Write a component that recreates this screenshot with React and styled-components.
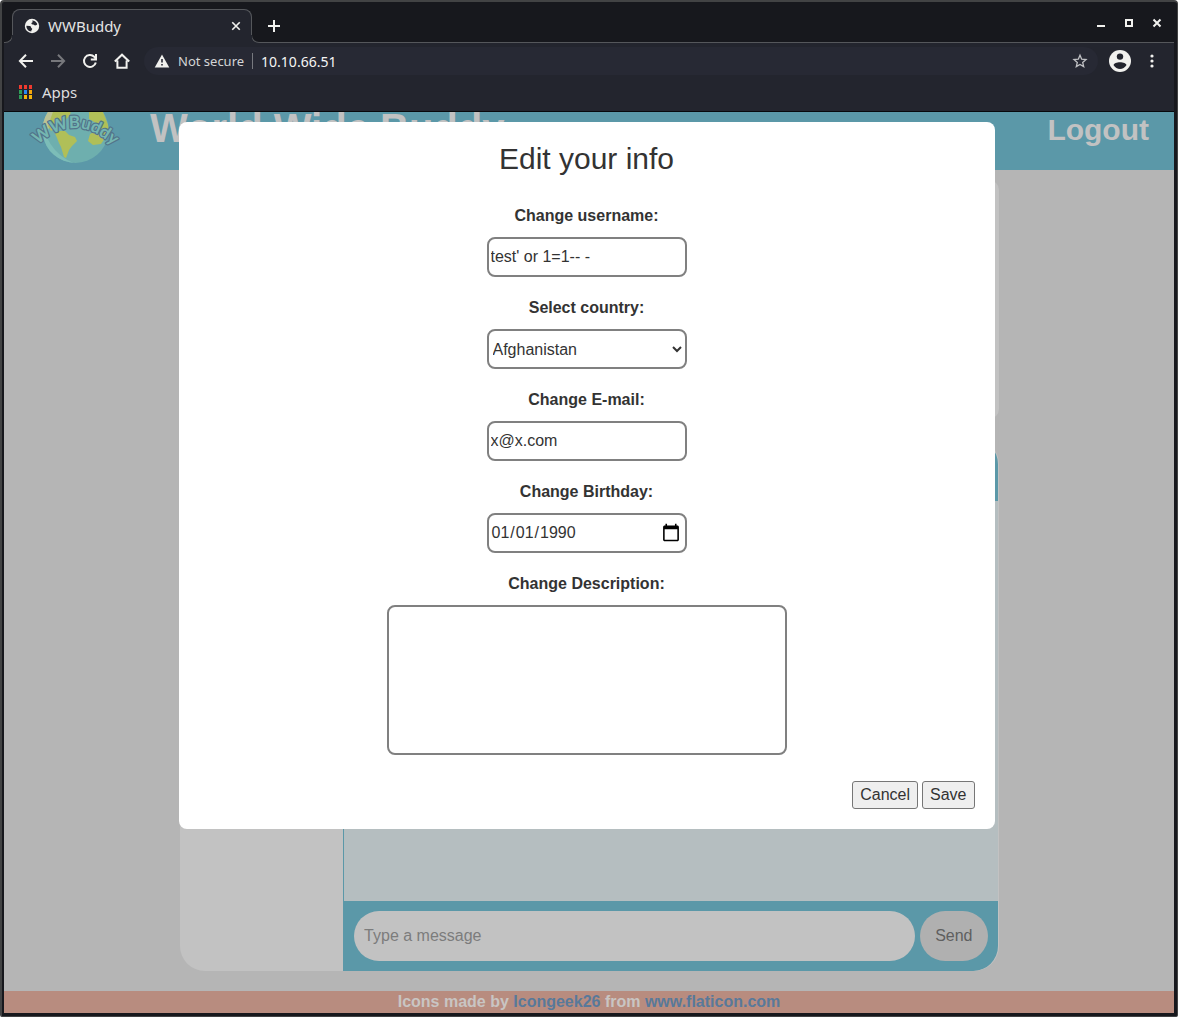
import React from "react";
import styled, { createGlobalStyle } from "styled-components";

const GlobalStyle = createGlobalStyle`
  *, *::before, *::after { box-sizing: border-box; }
  body { margin: 0; background: #fff; }
  button, input, select, textarea { font-family: inherit; margin: 0; }
`;

const sans = `"Liberation Sans", Arial, sans-serif`;
const chromeFont = `"Noto Sans", sans-serif`;

/* ---------- browser window ---------- */

const Window = styled.div`
  min-height: 100vh;
  display: flex;
  flex-direction: column;
  background: #17181d;
  border: 2px solid #424344;
  border-right-width: 1px;
  border-bottom-width: 1px;
  border-radius: 4px 4px 2px 2px;
  padding: 0 3px 3px 2px;
  font-family: ${chromeFont};
  color: #e4e4e4;
`;

const TabStrip = styled.div`
  display: flex;
  align-items: flex-end;
  height: 41px;
`;

const Foot = styled.span`
  width: 9px;
  height: 8px;
  background: #23252e;
  &::after {
    content: "";
    display: block;
    height: 8px;
    background: #17181d;
    border-bottom: 1px solid #55575b;
    border-${(p) => (p.$side === "left" ? "right" : "left")}: 1px solid #55575b;
    border-bottom-${(p) => (p.$side === "left" ? "right" : "left")}-radius: 8px;
  }
`;

const Tab = styled.div`
  position: relative;
  display: flex;
  align-items: center;
  gap: 8px;
  width: 240px;
  height: 34px;
  padding: 0 11px 1px 12px;
  margin: 0 -1px;
  background: #23252e;
  border-radius: 8px 8px 0 0;
  font-size: 15px;
  line-height: 20px;
  &::before {
    content: "";
    position: absolute;
    inset: 0 0 8px 0;
    border: 1px solid #55575b;
    border-bottom: 0;
    border-radius: 8px 8px 0 0;
    pointer-events: none;
  }
`;

const TabTitle = styled.span`
  flex: 1;
`;

const IconButton = styled.button`
  display: flex;
  align-items: center;
  justify-content: center;
  width: ${(p) => p.$size || 16}px;
  height: ${(p) => p.$size || 16}px;
  padding: 0;
  border: 0;
  background: none;
  color: ${(p) => (p.$dim ? "#77787c" : "#f1f1ee")};
`;

const StripRest = styled.div`
  flex: 1;
  align-self: stretch;
  display: flex;
  align-items: center;
  justify-content: space-between;
  padding: 8px 9px 0 2px;
  border-bottom: 1px solid #55575b;
`;

const WindowControls = styled.div`
  display: flex;
  gap: 12px;
  margin-top: -6px;
`;

const Toolbar = styled.div`
  display: flex;
  align-items: center;
  height: 36px;
  padding: 0 14px;
  background: #23252e;
`;

const Nav = styled.div`
  display: flex;
  gap: 16px;
  margin-right: 14px;
`;

const AddressBar = styled.div`
  flex: 1;
  display: flex;
  align-items: center;
  height: 28px;
  padding: 0 10px;
  margin-right: 11px;
  border-radius: 14px;
  background: #272934;
  font-size: 13px;
  line-height: 20px;
`;

const Security = styled.span`
  padding: 0 8px;
  color: #d4d5d6;
`;

const Address = styled.input`
  flex: 1;
  min-width: 0;
  padding: 0 0 0 8px;
  height: 16px;
  border: 0;
  border-left: 1px solid #77797f;
  background: none;
  color: #f5f5f5;
  font-size: 14px;
`;

const Actions = styled.div`
  display: flex;
  align-items: center;
  gap: 13px;
`;

const Bookmarks = styled.div`
  display: flex;
  align-items: center;
  height: 33px;
  padding: 0 15px 6px;
  background: #23252e;
  border-bottom: 1px solid #08090c;
`;

const Bookmark = styled.a`
  display: flex;
  align-items: center;
  gap: 9px;
  color: #dededf;
  font-size: 15px;
  line-height: 20px;
  text-decoration: none;
`;

/* ---------- site ---------- */

const Site = styled.div`
  position: relative;
  flex: 1;
  display: flex;
  flex-direction: column;
  background: #b5b5b5;
  font-family: ${sans};
  font-size: 16px;
  line-height: 18px;
`;

const SiteHeader = styled.header`
  display: flex;
  align-items: flex-end;
  height: 58px;
  padding: 0 25px 0 24px;
  background: #5b98a8;
  color: #c2c2c2;
`;

const SiteTitle = styled.h1`
  flex: 1;
  margin: 0 0 26px 30px;
  font-size: 40px;
  line-height: 32px;
`;

const Logout = styled.a`
  margin-bottom: 23px;
  color: inherit;
  font-size: 30px;
  font-weight: bold;
  line-height: 34px;
  text-decoration: none;
`;

const Main = styled.main`
  flex: 1;
  display: flex;
  flex-direction: column;
  gap: 20px;
  width: 70%;
  margin: 0 auto;
  padding: 10px 0 20px;
`;

const Profile = styled.section`
  min-height: 239px;
  border-radius: 10px;
  background: #c2c2c2;
`;

const Chat = styled.section`
  flex: 1;
  display: grid;
  grid-template-columns: 1fr 4fr;
  min-height: 532px;
  padding-right: 1px;
  border-radius: 25px;
  overflow: hidden;
  background: #c2c2c2;
`;

const Conversation = styled.div`
  display: flex;
  flex-direction: column;
  border-left: 1px solid #5b98a8;
  border-radius: 0 25px 25px 0;
  overflow: hidden;
  background: #5b98a8;
`;

const Messages = styled.div`
  flex: 1;
  margin-top: 62px;
  background: #b5bec0;
`;

const Composer = styled.form`
  display: flex;
  gap: 5px;
  padding: 10px;
`;

const MessageInput = styled.input`
  flex: 1;
  min-width: 0;
  height: 50px;
  padding: 0 10px;
  border: 0;
  border-radius: 25px;
  background: #c2c2c2;
  font-size: 16px;
  &::placeholder { color: #7c7c7c; }
`;

const SendButton = styled.button`
  padding: 0 15px;
  border: 0;
  border-radius: 25px;
  background: #b0b0b0;
  color: #5f5f5f;
  font-size: 16px;
`;

const Credits = styled.footer`
  padding: 2px 0;
  background: #b88c7f;
  color: #c9c5c3;
  font-weight: bold;
  text-align: center;
  a { color: #58799a; text-decoration: none; }
`;

const Dialog = styled.form`
  position: absolute;
  top: 10px;
  left: calc(15% - 1px);
  width: calc(70% - 3px);
  padding: 20px;
  border-radius: 8px;
  background: #fff;
  color: #333;
`;

const DialogTitle = styled.h2`
  margin: 0 0 31px;
  font-size: 30px;
  font-weight: normal;
  line-height: 34px;
  text-align: center;
`;

const Field = styled.div`
  display: flex;
  flex-direction: column;
  align-items: center;
  gap: 12px;
  margin-bottom: ${(p) => (p.$last ? 26 : 22)}px;
`;

const Label = styled.label`
  font-weight: bold;
`;

const TextBox = styled.input`
  width: 200px;
  height: 40px;
  padding: 1px 2px;
  border: 2px solid #808080;
  border-radius: 8px;
  background: #fff;
  color: #333;
  font-size: 16px;
  &::-webkit-calendar-picker-indicator {
    width: 20px;
    height: 20px;
  }
`;

const Select = styled(TextBox).attrs({ as: "select" })`
  padding: 0;
`;

const TextArea = styled(TextBox).attrs({ as: "textarea" })`
  display: block;
  width: 400px;
  height: 150px;
  resize: none;
`;

const Buttons = styled.div`
  display: flex;
  justify-content: flex-end;
  gap: 4px;
`;

const Button = styled.button`
  height: 28px;
  padding: 0 7px;
  border: 1px solid #767676;
  border-radius: 3px;
  background: #efefef;
  color: #333;
  font-size: 16px;
`;

/* ---------- drawings ---------- */

const Line = ({ d, size = 16, width = 2 }) => (
  <svg width={size} height={size} viewBox="0 0 16 16" fill="none" stroke="currentColor" strokeWidth={width}>
    <path d={d} />
  </svg>
);

const GlobeIcon = () => (
  <svg width="16" height="16" viewBox="0 0 16 16">
    <circle cx="8" cy="8" r="7.2" fill="#f1f1ee" />
    <path d="M8.2 2.4c2.4.1 4.3 1.6 5.1 3.7-.7 1.4-1.6 1.5-2.5 1.2-.7-.3-1.2-.9-2.1-.9-.9.1-1.5-.5-1.2-1.3.3-.9 1.2-.6 1.2-1.4 0-.5-.6-.8-.5-1.3zM2.4 7.8l3.4.1c1 .1 1.2.8 1.3 1.5.2.7 1 .6 1.1 1.4.1.9-.6 1.2-.9 1.8v1C4.4 13.3 2.3 10.9 2.4 7.8z" fill="#23252e" />
  </svg>
);

const WarningIcon = () => (
  <svg width="16" height="16" viewBox="0 0 16 16">
    <path d="M8 1.5L15.3 14.5H.7z" fill="#f1f1ee" />
    <path d="M7.2 6h1.6v3.6H7.2zM7.2 11h1.6v1.6H7.2z" fill="#272934" />
  </svg>
);

const StarIcon = () => (
  <svg width="16" height="16" viewBox="0 0 16 16" fill="none" stroke="#c0c1c4" strokeWidth="1.3">
    <path d="M8 2.2l1.7 4 4.3.4-3.3 2.8 1 4.2L8 11.4l-3.7 2.2 1-4.2L2 6.6l4.300-.4z" />
  </svg>
);

const PersonIcon = () => (
  <svg width="22" height="22" viewBox="0 0 22 22">
    <circle cx="11" cy="11" r="11" fill="#f1f1ee" />
    <circle cx="11" cy="6.6" r="3.2" fill="#23252e" />
    <path d="M4.600 15.200c0-4 12.800-4 12.800 0-1.500 2.400-3.800 3.700-6.400 3.700s-4.900-1.300-6.400-3.700z" fill="#23252e" />
  </svg>
);

const DotsIcon = () => (
  <svg width="16" height="16" viewBox="0 0 16 16" fill="#f1f1ee">
    <circle cx="8" cy="3" r="1.6" />
    <circle cx="8" cy="8" r="1.6" />
    <circle cx="8" cy="13" r="1.6" />
  </svg>
);

const appColors = ["#f03a2e", "#f03a2e", "#f03a2e", "#2f9e58", "#2a8cf0", "#f5a70c", "#2f9e58", "#f5b50c", "#f5b50c"];

const AppsIcon = () => (
  <svg width="14" height="14" viewBox="0 0 14 14">
    {appColors.map((c, i) => (
      <rect key={i} x={(i % 3) * 5} y={Math.floor(i / 3) * 5} width="3" height="4" fill={c} />
    ))}
  </svg>
);

const LogoSvg = styled.svg`
  flex: none;
  overflow: visible;
`;

const Logo = () => (
  <LogoSvg width="92" height="58" viewBox="28 112 92 58" role="img" aria-label="WWBuddy">
    <defs>
      <clipPath id="globe"><path d="M47.8 112A33 33 0 1 0 103.200 112z" /></clipPath>
      <path id="arc" d="M38 145Q56 128 76 128Q95 128 118 150" />
    </defs>
    <g clipPath="url(#globe)">
      <rect x="28" y="90" width="92" height="80" fill="#6eafae" />
      <path d="M42 105Q40 150 76 164L40 164V105z" fill="#7cbdb8" />
      <path d="M42 108h16l-10 22h-8z" fill="#bcc394" />
      <path d="M55 106l17 0-2 9-9 10-10 6-3-5z" fill="#b0bf58" />
      <path d="M54 131l11 0 4 4 6 2 2 4-5 5-3 4-3 8-2-1-3-10-2-4-2-5z" fill="#b0bf58" />
      <path d="M89 112l14 0 8 20-6 6-4 6-8 1-5-4 2-7 6-3 0-8-7-4z" fill="#b0bf58" />
    </g>
    <text
      fontFamily="Lato, sans-serif"
      fontSize="17"
      fontWeight="bold"
      fill="#74b6b1"
      stroke="#52748a"
      strokeWidth="2.400"
      strokeLinejoin="round"
      paintOrder="stroke"
    >
      <textPath href="#arc">WWBuddy</textPath>
    </text>
  </LogoSvg>
);

/* ---------- app ---------- */

const BrowserChrome = () => (
  <>
    <TabStrip>
      <Foot $side="left" />
      <Tab>
        <GlobeIcon />
        <TabTitle>WWBuddy</TabTitle>
        <IconButton $size={10} aria-label="Close tab">
          <Line size={10} d="M2 2L14 14M14 2L2 14" width={2.6} />
        </IconButton>
      </Tab>
      <Foot $side="right" />
      <StripRest>
        <IconButton aria-label="New tab" $size={24}>
          <Line d="M8 2v12M2 8h12" />
        </IconButton>
        <WindowControls>
          <IconButton aria-label="Minimize"><Line d="M4 11h8" /></IconButton>
          <IconButton aria-label="Maximize"><Line d="M5 5h6v6H5z" /></IconButton>
          <IconButton aria-label="Close"><Line d="M4.5 4.5l7 7M11.5 4.5l-7 7" /></IconButton>
        </WindowControls>
      </StripRest>
    </TabStrip>
    <Toolbar>
      <Nav>
        <IconButton aria-label="Back"><Line d="M15 8H2.5M8 1.8L1.9 8 8 14.2" /></IconButton>
        <IconButton aria-label="Forward" $dim><Line d="M1 8h12.5M8 1.8L14.1 8 8 14.2" /></IconButton>
        <IconButton aria-label="Reload">
          <Line d="M13.8 9.5A6 6 0 1 1 12.3 3.8L14 5.5M14 1v5.600H8.800" />
        </IconButton>
        <IconButton aria-label="Home"><Line d="M.8 8.500L8 1.700l7.200 6.800M3.400 7.500v7.300h9.200V7.500" /></IconButton>
      </Nav>
      <AddressBar>
        <WarningIcon />
        <Security>Not secure</Security>
        <Address aria-label="Address" defaultValue="10.10.66.51" />
        <IconButton aria-label="Bookmark this page"><StarIcon /></IconButton>
      </AddressBar>
      <Actions>
        <IconButton aria-label="Profile" $size={22}><PersonIcon /></IconButton>
        <IconButton aria-label="Menu"><DotsIcon /></IconButton>
      </Actions>
    </Toolbar>
    <Bookmarks>
      <Bookmark href="#apps"><AppsIcon />Apps</Bookmark>
    </Bookmarks>
  </>
);

const EditDialog = () => (
  <Dialog role="dialog" aria-labelledby="edit-title" onSubmit={(e) => e.preventDefault()}>
    <DialogTitle id="edit-title">Edit your info</DialogTitle>
    <Field>
      <Label htmlFor="username">Change username:</Label>
      <TextBox id="username" defaultValue="test' or 1=1-- -" />
    </Field>
    <Field>
      <Label htmlFor="country">Select country:</Label>
      <Select id="country" defaultValue="Afghanistan">
        <option>Afghanistan</option>
      </Select>
    </Field>
    <Field>
      <Label htmlFor="email">Change E-mail:</Label>
      <TextBox id="email" type="email" defaultValue="x@x.com" />
    </Field>
    <Field>
      <Label htmlFor="birthday">Change Birthday:</Label>
      <TextBox id="birthday" type="date" defaultValue="1990-01-01" />
    </Field>
    <Field $last>
      <Label htmlFor="description">Change Description:</Label>
      <TextArea id="description" />
    </Field>
    <Buttons>
      <Button type="button">Cancel</Button>
      <Button type="submit">Save</Button>
    </Buttons>
  </Dialog>
);

export default function App() {
  return (
    <>
      <GlobalStyle />
      <Window>
        <BrowserChrome />
        <Site>
          <SiteHeader>
            <Logo />
            <SiteTitle>World Wide Buddy</SiteTitle>
            <Logout href="#logout">Logout</Logout>
          </SiteHeader>
          <Main>
            <Profile />
            <Chat>
              <div />
              <Conversation>
                <Messages />
                <Composer onSubmit={(e) => e.preventDefault()}>
                  <MessageInput aria-label="Message" placeholder="Type a message" />
                  <SendButton>Send</SendButton>
                </Composer>
              </Conversation>
            </Chat>
          </Main>
          <Credits>
            Icons made by <a href="#icongeek26">Icongeek26</a> from <a href="#flaticon">www.flaticon.com</a>
          </Credits>
          <EditDialog />
        </Site>
      </Window>
    </>
  );
}
